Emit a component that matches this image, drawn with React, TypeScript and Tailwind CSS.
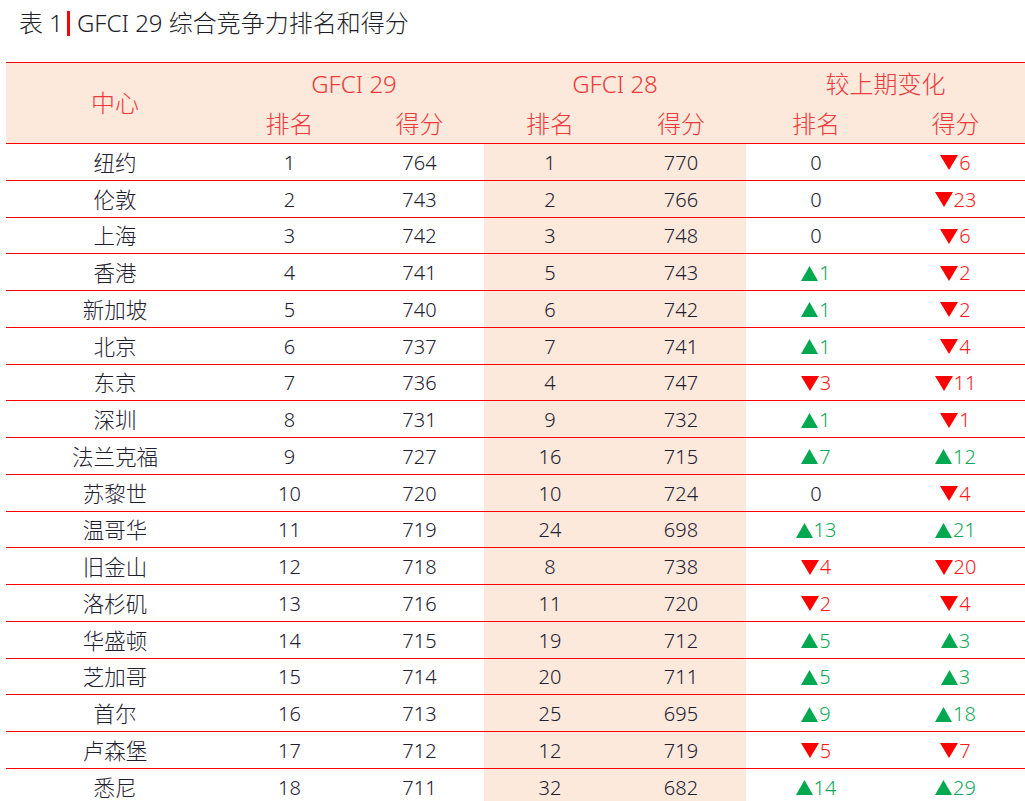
import React from "react";

type Row = [string, number, number, number, number, number, number];

const rows: Row[] = [
  ["纽约", 1, 764, 1, 770, 0, -6],
  ["伦敦", 2, 743, 2, 766, 0, -23],
  ["上海", 3, 742, 3, 748, 0, -6],
  ["香港", 4, 741, 5, 743, 1, -2],
  ["新加坡", 5, 740, 6, 742, 1, -2],
  ["北京", 6, 737, 7, 741, 1, -4],
  ["东京", 7, 736, 4, 747, -3, -11],
  ["深圳", 8, 731, 9, 732, 1, -1],
  ["法兰克福", 9, 727, 16, 715, 7, 12],
  ["苏黎世", 10, 720, 10, 724, 0, -4],
  ["温哥华", 11, 719, 24, 698, 13, 21],
  ["旧金山", 12, 718, 8, 738, -4, -20],
  ["洛杉矶", 13, 716, 11, 720, -2, -4],
  ["华盛顿", 14, 715, 19, 712, 5, 3],
  ["芝加哥", 15, 714, 20, 711, 5, 3],
  ["首尔", 16, 713, 25, 695, 9, 18],
  ["卢森堡", 17, 712, 12, 719, -5, -7],
  ["悉尼", 18, 711, 32, 682, 14, 29],
];

const font = {
  fontFamily: '"Noto Sans", "Noto Sans CJK SC", sans-serif',
};

function Change({ v }: { v: number }) {
  if (v === 0) return <span className="text-[#1e2030]">0</span>;
  if (v > 0)
    return (
      <span className="inline-flex items-center text-[#10a85a]">
        <svg width="17" height="15" viewBox="0 0 17 15" className="mr-[1px]">
          <polygon points="8.5,0 17,15 0,15" fill="#00a84f" />
        </svg>
        {v}
      </span>
    );
  return (
    <span className="inline-flex items-center text-[#ff1a1a]">
      <svg width="18" height="15" viewBox="0 0 18 15" className="mr-[1px]">
        <polygon points="0,0 18,0 9,15" fill="#ff0000" />
      </svg>
      {-v}
    </span>
  );
}

const cols = "grid grid-cols-[218px_131px_129px_132px_130px_140px_139px]";

export default function App() {
  return (
    <div className="w-[1025px] h-[801px] overflow-hidden bg-white" style={font}>
      <div className="h-[44px] pl-[19px] pt-[2px] flex items-center text-[24px] text-[#1e1e28] font-light leading-none">
        <span>表 1</span>
        <span className="inline-block w-[3px] h-[25px] bg-[#ff0000] ml-[4px] mr-[7px]" />
        <span>GFCI 29 综合竞争力排名和得分</span>
      </div>
      <div className="ml-[6px] mt-[18px] w-[1019px]">
        <div className={`${cols} h-[82px] bg-[#fce9dc] border-t-[1.5px] border-b-[1.5px] border-[#ff0000] text-[#ee3a3a] text-[24px] font-light`}>
          <div className="row-span-2 flex items-center justify-center">中心</div>
          <div className="col-span-2 flex items-end justify-center pb-[2px]">GFCI 29</div>
          <div className="col-span-2 flex items-end justify-center pb-[2px]">GFCI 28</div>
          <div className="col-span-2 flex items-end justify-center pb-[2px]">较上期变化</div>
          <div className="flex items-center justify-center">排名</div>
          <div className="flex items-center justify-center">得分</div>
          <div className="flex items-center justify-center">排名</div>
          <div className="flex items-center justify-center">得分</div>
          <div className="flex items-center justify-center">排名</div>
          <div className="flex items-center justify-center">得分</div>
        </div>
        {rows.map((r) => (
          <div
            key={r[0]}
            className={`${cols} h-[36.75px] border-b-[1.5px] border-[#ff0000] text-[20px] font-light text-[#1e2030]`}
          >
            <div className="flex items-center justify-center text-[21.5px] pt-[2px]">{r[0]}</div>
            <div className="flex items-center justify-center pt-[2px]">{r[1]}</div>
            <div className="flex items-center justify-center pt-[2px]">{r[2]}</div>
            <div className="flex items-center justify-center pt-[2px] bg-[#fce9dc]">{r[3]}</div>
            <div className="flex items-center justify-center pt-[2px] bg-[#fce9dc]">{r[4]}</div>
            <div className="flex items-center justify-center pt-[2px]">
              <Change v={r[5]} />
            </div>
            <div className="flex items-center justify-center pt-[2px]">
              <Change v={r[6]} />
            </div>
          </div>
        ))}
      </div>
    </div>
  );
}
